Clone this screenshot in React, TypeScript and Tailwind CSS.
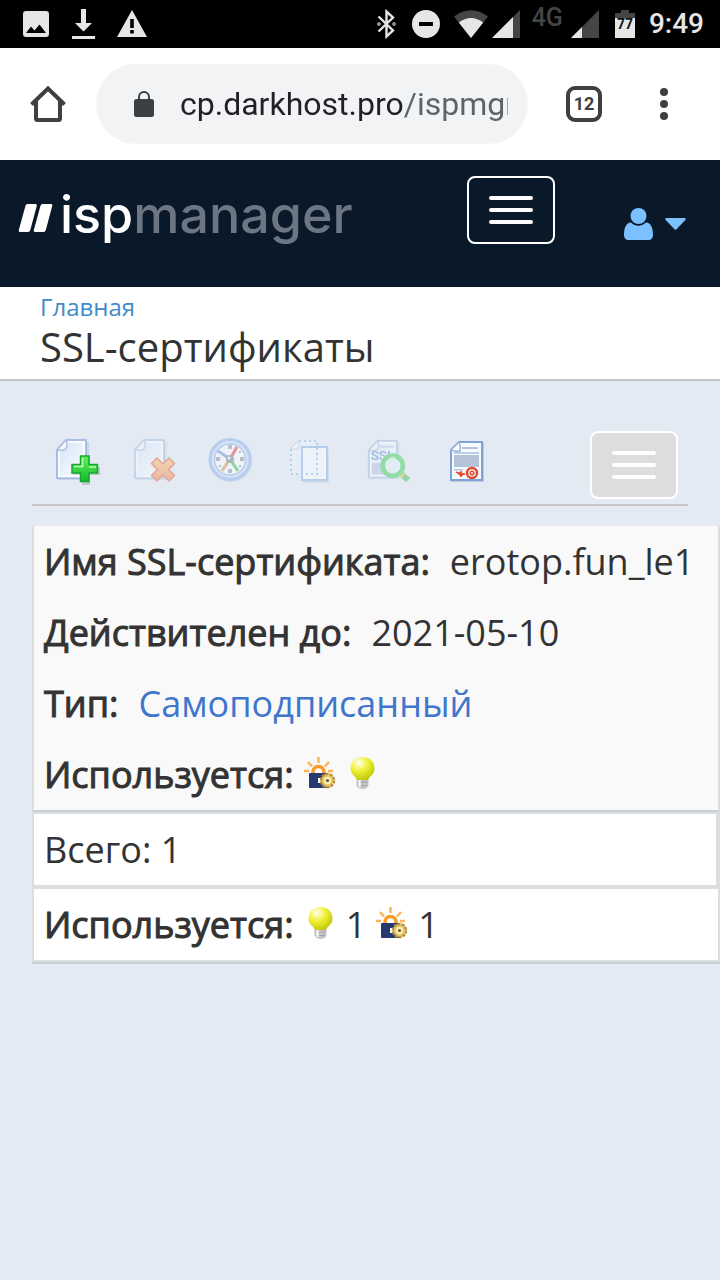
import React from 'react';

type IconProps = { className?: string };

const StatusBar: React.FC = () => (
  <div className="flex h-12 items-center justify-between bg-black pl-[23px] pr-4 text-[#e6e6e6]">
    <div className="flex items-center gap-[22px]">
      <svg width="26" height="26" viewBox="0 0 26 26" fill="currentColor">
        <path fillRule="evenodd" d="M3 0h20a3 3 0 0 1 3 3v20a3 3 0 0 1-3 3H3a3 3 0 0 1-3-3V3a3 3 0 0 1 3-3zM3 22h20l-6.500-8.500-5 6-3.500-4z" />
      </svg>
      <svg width="24" height="32" viewBox="0 0 24 32" fill="currentColor">
        <path d="M10 1h5v14h6l-8.500 8.500L4 15h6zM1 28h23v3H1z" />
      </svg>
      <svg width="30" height="28" viewBox="0 0 30 28" fill="currentColor">
        <path fillRule="evenodd" d="M15 0l15 27H0zM13.200 9v9h3.600V9zM13.200 20v3.500h3.600V20z" />
      </svg>
    </div>
    <div className="flex items-center">
      <svg className="mr-4" width="19" height="30" viewBox="0 0 19 30" fill="none" stroke="currentColor" strokeWidth="2.400">
        <path d="M1.500 7.500L16 21.500l-6.500 6v-25L16 8.500 1.500 22.500" />
        <circle cx="2" cy="15" r="0.500" />
        <circle cx="17" cy="15" r="0.500" />
      </svg>
      <svg className="mr-3.5" width="28" height="28" viewBox="0 0 28 28">
        <circle cx="14" cy="14" r="14" fill="currentColor" />
        <path d="M7 12h14v4H7z" fill="#000" />
      </svg>
      <svg className="mr-1" width="34" height="28" viewBox="0 0 34 28">
        <path d="M17 28L0 6.500Q17-6 34 6.500z" fill="#454545" />
        <path d="M17 28L4.800 12.500Q17 3.500 29.200 12.500z" fill="currentColor" />
      </svg>
      <svg className="mr-3" width="28" height="28" viewBox="0 0 28 28">
        <path d="M0 28L28 0v28z" fill="#454545" />
        <path d="M0 28L21 7v21z" fill="currentColor" />
      </svg>
      <span className="mr-2 pb-3 text-[25px] leading-6 font-medium text-[#454545]">4G</span>
      <svg className="mr-4" width="28" height="28" viewBox="0 0 28 28">
        <path d="M0 28L28 0v28z" fill="#454545" />
        <path d="M0 28l11-11v11z" fill="currentColor" />
      </svg>
      <svg className="mr-3.5" width="20" height="30" viewBox="0 0 20 30">
        <path d="M6 1h8v3h6v5H0V4h6z" fill="#454545" />
        <path d="M0 9h20v20H0z" fill="currentColor" />
        <text x="10" y="20" textAnchor="middle" fontFamily="Roboto, sans-serif" fontSize="14" fontWeight="700" fill="#111">77</text>
      </svg>
      <span className="text-[28px] leading-8 font-medium">9:49</span>
    </div>
  </div>
);

const BrowserBar: React.FC = () => (
  <div className="flex h-28 items-center bg-white pl-[30px] pr-[52px] text-[#3c4043]">
    <button type="button" aria-label="Home">
      <svg width="36" height="36" viewBox="0 0 36 36" fill="none" stroke="currentColor" strokeWidth="4">
        <path d="M1.500 18.500L18 2.500l16.500 16" />
        <path d="M6 14v18.500q0 1.500 1.500 1.500h21q1.500 0 1.500-1.500V14" />
      </svg>
    </button>
    <div className="mx-[30px] flex h-20 min-w-0 flex-1 items-center rounded-full bg-[#f1f3f4] pl-[38px] pr-5">
      <svg className="mr-[26px] shrink-0" width="20" height="26" viewBox="0 0 20 26">
        <rect y="8" width="20" height="18" rx="2.500" fill="currentColor" />
        <path d="M5 9V6a5 5 0 0 1 10 0v3" fill="none" stroke="currentColor" strokeWidth="2" />
      </svg>
      <input
        aria-label="URL"
        readOnly
        value="cp.darkhost.pro/ispmgr"
        className="h-12 w-full min-w-0 bg-linear-to-r from-[#202124] from-[222px] to-[#5f6368] to-[222px] bg-clip-text text-[32px] text-transparent outline-none"
      />
    </div>
    <button type="button" aria-label="Tabs" className="mx-2 h-9 w-9 rounded-[9px] border-4 border-current text-[18px] leading-7 font-bold">
      12
    </button>
    <button type="button" aria-label="Menu" className="ml-[50px] flex flex-col gap-1">
      <span className="h-2 w-2 rounded-full bg-current" />
      <span className="h-2 w-2 rounded-full bg-current" />
      <span className="h-2 w-2 rounded-full bg-current" />
    </button>
  </div>
);

const Bars: React.FC = () => (
  <>
    <span className="h-1 w-11 rounded-sm bg-white" />
    <span className="h-1 w-11 rounded-sm bg-white" />
    <span className="h-1 w-11 rounded-sm bg-white" />
  </>
);

const Header: React.FC = () => (
  <header className="flex h-[127px] items-start bg-[#091929] pl-[18px] pr-[34px] pt-4">
    <a href="#" className="mt-1 flex items-center">
      <svg className="mt-1.5" width="36" height="28" viewBox="0 0 36 28" fill="#fff">
        <path d="M9.500 0h8q1.800 0 1.300 1.800l-6.400 24Q11.800 28 10 28H2Q.2 28 .8 26L7.500 1.800Q8 0 9.500 0z" />
        <path d="M24.500 0h8.500q1.800 0 1.300 1.800l-6.400 24Q27.300 28 25.500 28H17q-1.800 0-1.200-2l6.700-24.200Q23 0 24.500 0z" />
      </svg>
      <span className="ml-1.5 font-[Inter,sans-serif] text-[52px] leading-[70px] font-medium text-[#6b7682]">
        <span className="text-white">isp</span>manager
      </span>
    </a>
    <button type="button" aria-label="Menu" className="ml-auto flex h-[68px] w-[88px] flex-col items-center justify-center gap-2 rounded-lg border-2 border-white">
      <Bars />
    </button>
    <button type="button" aria-label="User" className="ml-[69px] mt-8 flex items-center gap-3 text-[#7bc0ff]">
      <svg width="29" height="32" viewBox="0 0 29 32" fill="currentColor">
        <circle cx="14.500" cy="8" r="8" />
        <path d="M7 14.500q3.300 3.300 7.500 3.300t7.500-3.300c5 .2 7 5.500 7 12.500 0 3-2 5-4.500 5h-20C2 32 0 30 0 27c0-7 2-12.300 7-12.500z" />
      </svg>
      <svg width="21" height="12" viewBox="0 0 21 12" fill="currentColor">
        <path d="M1 0h19q1.300.8.300 2l-8.800 9.200q-1 1-2 0L.700 2Q-.3.800 1 0z" />
      </svg>
    </button>
  </header>
);

// sheet with folded corner, shared by most toolbar icons
const Sheet: React.FC = () => (
  <>
    <path d="M14 6h23v38H6V16z" fill="#9caccb" opacity="0.350" />
    <path d="M14 4h20v38H5V14z" fill="url(#sheet)" stroke="#a5bfe8" strokeWidth="2" />
    <path d="M15.500 6H32v34.500H7V15" fill="none" stroke="#fff" strokeWidth="1.500" />
    <path d="M5 14L14 4q2 4 0 9-4 2-9 1z" fill="#f4f8fd" stroke="#aebfda" strokeWidth="1.500" />
  </>
);

const AddIcon: React.FC = () => (
  <svg width="48" height="50" viewBox="0 0 48 50">
    <Sheet />
    <path d="M30 22h8v9h10v8H38v10h-8V39H21v-8h9z" fill="#7d95a0" opacity="0.400" />
    <path d="M28.500 20h8.500v8.500h8.500V37H37v8.500h-8.500V37H20v-8.500h8.500z" fill="url(#green)" stroke="#16a82c" strokeWidth="1.500" />
    <path d="M30.500 22v8.500H22M37 31h7" fill="none" stroke="#b9ffb4" strokeWidth="1.500" />
  </svg>
);

const DeleteIcon: React.FC = () => (
  <svg width="48" height="50" viewBox="0 0 48 50" opacity="0.500">
    <Sheet />
    <path d="M27 22l6 6 6-6 5.500 5.500-6 6 6 6L39 45l-6-6-6 6-5.500-5.500 6-6-6-6z" fill="url(#orange)" stroke="#e9633c" strokeWidth="1.500" />
  </svg>
);

const ClockIcon: React.FC = () => (
  <svg width="48" height="50" viewBox="0 0 48 50" opacity="0.500">
    <circle cx="23" cy="24.500" r="21.500" fill="#8ea5c8" opacity="0.350" />
    <circle cx="22" cy="23.500" r="20" fill="#c6dcfa" stroke="#8fb2ea" strokeWidth="3" />
    <circle cx="22" cy="23.500" r="15.500" fill="#fcfdff" stroke="#8fb1e4" strokeWidth="1.500" />
    <path d="M20 9h4v4h-4zM20 33h4v4h-4zM8 21h4v4H8zM32 21h4v4h-4zM31 15h2v2h-2zM31 29h2v2h-2zM11 29h2v2h-2z" fill="#8e969f" />
    <path d="M22 23L10 15" stroke="#6e91d0" strokeWidth="3" />
    <path d="M22 23l7-12" stroke="#f13840" strokeWidth="3" />
    <path d="M22 23l8 12" stroke="#35c64b" strokeWidth="3" />
    <path d="M22 23l-8 12" stroke="#d79348" strokeWidth="3" />
    <circle cx="22" cy="23" r="4" fill="#777e87" />
    <circle cx="21" cy="22" r="1.500" fill="#fff" />
  </svg>
);

const CopyIcon: React.FC = () => (
  <svg width="48" height="50" viewBox="0 0 48 50" opacity="0.500">
    <path d="M12 4h20v34H4V13z" fill="#e7f1fc" />
    <path d="M13 5h18v33H5V13" fill="none" stroke="#8db3df" strokeWidth="2" strokeDasharray="2 3" />
    <path d="M17 13h26v34H17z" fill="#94a8c5" opacity="0.350" />
    <path d="M16 11h25v33H16z" fill="#f6faff" stroke="#88b0e2" strokeWidth="2" />
    <path d="M18 13h21v29H18z" fill="none" stroke="#fff" strokeWidth="1.500" />
    <path d="M31 12v26H17" fill="none" stroke="#8db3df" strokeWidth="2" strokeDasharray="2 3" />
    <path d="M4 13l8-8q2 4 0 8z" fill="#f8fbff" stroke="#aebfda" />
  </svg>
);

const SslIcon: React.FC = () => (
  <svg width="50" height="50" viewBox="0 0 50 50" opacity="0.550">
    <Sheet />
    <path d="M17 9h14v2H17zM8 27h24v12H8z" fill="#b9c9e2" />
    <text x="7" y="24" fontFamily="Roboto, sans-serif" fontSize="14" fontWeight="500" fill="#6a91c8">SSL</text>
    <path d="M37 37l9 8" stroke="#4ecb5c" strokeWidth="6" />
    <path d="M36 36l5 5" stroke="#ecbd51" strokeWidth="5" />
    <circle cx="30" cy="30" r="10.500" fill="#e0f0f8" stroke="#51d267" strokeWidth="5" />
    <path d="M23 26q4-5 9-5" fill="none" stroke="#b6f5ba" strokeWidth="1.500" />
  </svg>
);

const CertIcon: React.FC = () => (
  <svg width="48" height="50" viewBox="0 0 48 50">
    <path d="M15 7h27v39H9V16z" fill="#8799b7" opacity="0.400" />
    <path d="M17 6h23v38H9V14z" fill="#f6faff" stroke="#7fa3d7" strokeWidth="2" />
    <path d="M20 11h16v2H20zM12 19h25v12H12zM12 33h9v1.500h-9z" fill="#b5c3d9" />
    <path d="M12 17h25" stroke="#a8bfe2" strokeWidth="1.500" />
    <path d="M9 14l8-8q2 4 1 9-4 1-9-1z" fill="#fff" stroke="#9db4d6" strokeWidth="1.500" />
    <path d="M14 36l4 1 1-2 1 2.500 3 .5-3 1-1 2-1-2z" fill="#e4462a" stroke="#e4462a" />
    <circle cx="30" cy="37" r="5" fill="#fff" stroke="#df4b2e" strokeWidth="2.500" />
    <circle cx="30" cy="37" r="1.800" fill="none" stroke="#df4b2e" strokeWidth="1.500" />
  </svg>
);

const tools = [
  { label: 'Создать', Icon: AddIcon },
  { label: 'Удалить', Icon: DeleteIcon },
  { label: 'История', Icon: ClockIcon },
  { label: 'Копировать', Icon: CopyIcon },
  { label: 'Данные SSL', Icon: SslIcon },
  { label: 'Сертификат', Icon: CertIcon },
];

const Toolbar: React.FC = () => (
  <div className="mx-8 flex items-center border-b-2 border-[#c6c6c6] pt-[50px] pb-[5px] pl-5 pr-2.5">
    <svg width="0" height="0" className="absolute">
      <defs>
        <linearGradient id="sheet" x1="0" y1="0" x2="1" y2="1">
          <stop offset="0" stopColor="#d2e2f6" />
          <stop offset="0.600" stopColor="#edf4fc" />
          <stop offset="1" stopColor="#fff" />
        </linearGradient>
        <linearGradient id="green" x1="0" y1="0" x2="0" y2="1">
          <stop offset="0" stopColor="#63f05c" />
          <stop offset="1" stopColor="#13ba2b" />
        </linearGradient>
        <linearGradient id="orange" x1="0" y1="0" x2="0" y2="1">
          <stop offset="0" stopColor="#ffc46a" />
          <stop offset="1" stopColor="#f08657" />
        </linearGradient>
        <radialGradient id="bulb" cx="0.350" cy="0.250" r="0.800">
          <stop offset="0" stopColor="#fffff0" />
          <stop offset="0.450" stopColor="#f0f23a" />
          <stop offset="1" stopColor="#bfc400" />
        </radialGradient>
      </defs>
    </svg>
    <div className="-mt-2 flex gap-[30px]">
      {tools.map(({ label, Icon }) => (
        <button key={label} type="button" aria-label={label} className="flex w-12">
          <Icon />
        </button>
      ))}
    </div>
    <button type="button" aria-label="Меню" className="ml-auto flex h-[68px] w-[88px] flex-col items-center justify-center gap-2 rounded-lg border-2 border-white bg-[#ddd]">
      <Bars />
    </button>
  </div>
);

const SunLock: React.FC<IconProps> = ({ className }) => (
  <svg className={className} width="32" height="32" viewBox="0 0 32 32">
    <path d="M14.500 0v6M4 5l4 4.500M25 5l-4 4.500M0 14h5M24 14h5" stroke="#fdb55a" strokeWidth="2.500" />
    <path d="M9 17v-2a5.500 5.500 0 0 1 11 0v2" fill="none" stroke="#f99a2b" strokeWidth="3.500" />
    <rect x="5" y="16" width="18" height="15" rx="1" fill="#26396f" />
    <path d="M14 21h3v5h-3z" fill="#fff" />
    <circle cx="23.500" cy="23.500" r="6.500" fill="#f4df8c" stroke="#b98c38" strokeWidth="2.500" strokeDasharray="3 1" />
    <circle cx="23.500" cy="23.500" r="4.500" fill="#fbf0b4" stroke="#e0c262" strokeWidth="1.500" />
    <circle cx="23.500" cy="23.500" r="1.600" fill="#7a5428" />
  </svg>
);

const Bulb: React.FC<IconProps> = ({ className }) => (
  <svg className={className} width="32" height="32" viewBox="0 0 32 32">
    <path d="M10.500 21h12v7q-1 4-6 4t-6-4z" fill="#c5c3c8" />
    <path d="M11 25h11M11 28.500h10" stroke="#a5a3a9" strokeWidth="1.200" />
    <path d="M13.500 22v8" stroke="#f6f6f8" strokeWidth="2.500" />
    <path d="M16.500 0C24 0 28.500 5 28.500 11.500 28.500 18 23 19 22 23H11c-1-4-6.500-5-6.500-11.500C4.500 5 9 0 16.500 0z" fill="url(#bulb)" />
  </svg>
);

const Label: React.FC<{ children: React.ReactNode }> = ({ children }) => (
  <span className="[-webkit-text-stroke:1px_#333]">{children}</span>
);

const CertTable: React.FC = () => (
  <table className="mt-5 ml-8 block text-[36px] leading-[51px] text-[#333]">
    <tbody className="block">
      <tr className="block border-x-2 border-b-2 border-x-[#ddd] border-b-[#c4cfd6] bg-[#f9f9f9]">
        <td className="block px-2.5 py-2.5"><Label>Имя SSL-сертификата:</Label><span className="ml-5">erotop.fun_le1</span></td>
        <td className="block px-2.5 py-2.5"><Label>Действителен до:</Label><span className="ml-5">2021-05-10</span></td>
        <td className="block px-2.5 py-2.5"><Label>Тип:</Label><a href="#" className="ml-5 text-[#3f76cc]">Самоподписанный</a></td>
        <td className="flex items-center px-2.5 py-2.5">
          <Label>Используется:</Label>
          <SunLock className="mb-1 ml-2.5" />
          <Bulb className="mb-1 ml-2.5" />
        </td>
      </tr>
    </tbody>
    <tfoot className="block border-b-2 border-[#c4cfd6]">
      <tr className="block">
        <td className="block border-2 border-r-4 border-[#ddd] bg-white px-2.5 py-2.5">Всего: 1</td>
      </tr>
      <tr className="block">
        <td className="flex items-center border-2 border-[#ddd] bg-white px-2.5 py-2.5">
          <Label>Используется:</Label>
          <Bulb className="mb-1 ml-2.5" />
          <span className="ml-2.5">1</span>
          <SunLock className="mb-1 ml-2.5" />
          <span className="ml-2.5">1</span>
        </td>
      </tr>
    </tfoot>
  </table>
);

export default function App() {
  return (
    <div className="min-h-screen overflow-x-hidden bg-[#e3eaf3] font-[Roboto,sans-serif]">
      <StatusBar />
      <BrowserBar />
      <Header />
      <main className="font-['Open_Sans',sans-serif]">
        <div className="border-b-2 border-[#c6c6c6] bg-white px-10 pt-1 pb-2 text-[#333]">
          <a href="#" className="block text-[24px] leading-8 text-[#428bca]">Главная</a>
          <h1 className="text-[40px] leading-[48px]">SSL-сертификаты</h1>
        </div>
        <Toolbar />
        <CertTable />
      </main>
    </div>
  );
}
